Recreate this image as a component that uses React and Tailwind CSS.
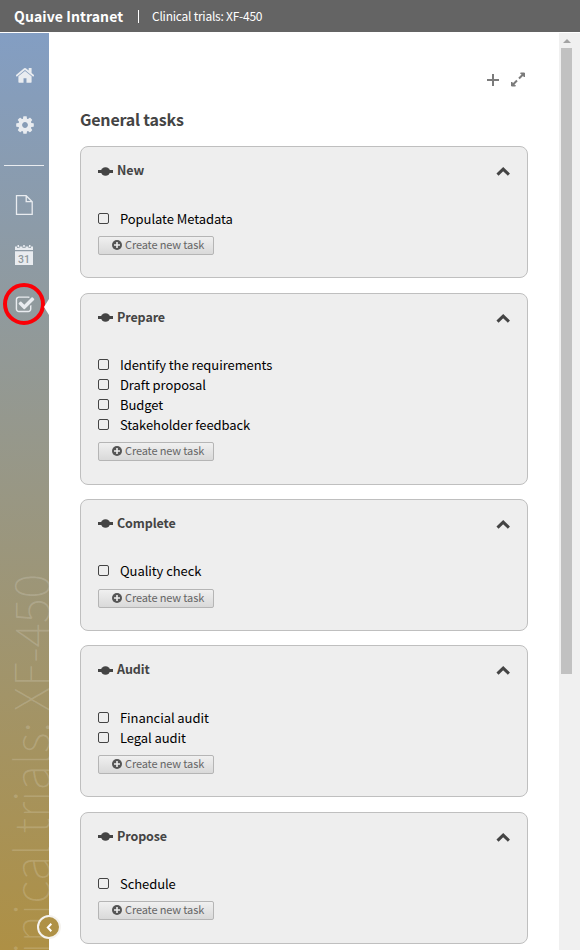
import React from "react";

const SECTIONS = [
  { title: "New", tasks: ["Populate Metadata"] },
  {
    title: "Prepare",
    tasks: ["Identify the requirements", "Draft proposal", "Budget", "Stakeholder feedback"],
  },
  { title: "Complete", tasks: ["Quality check"] },
  { title: "Audit", tasks: ["Financial audit", "Legal audit"] },
  { title: "Propose", tasks: ["Schedule"] },
];

const HOME =
  "M1472 992v480q0 26-19 45t-45 19h-384v-384h-256v384h-384q-26 0-45-19t-19-45v-480q0-1 .5-3t.5-3l575-474 575 474q1 2 1 6zm223-69l-62 74q-8 9-21 11h-3q-13 0-21-7l-692-577-692 577q-12 8-24 7-13-2-21-11l-62-74q-8-10-7-23.5t11-21.5l719-599q32-26 76-26t76 26l244 204v-195q0-14 9-23t23-9h192q14 0 23 9t9 23v408l219 182q10 8 11 21.5t-7 23.5z";
const COG =
  "M1152 896q0-106-75-181t-181-75-181 75-75 181 75 181 181 75 181-75 75-181zm512-109v222q0 12-8 23t-20 13l-185 28q-19 54-39 91 35 50 107 138 10 12 10 25t-9 23q-27 37-99 108t-94 71q-12 0-26-9l-138-108q-44 23-91 38-16 136-29 186-7 28-36 28h-222q-14 0-24.5-8.5t-11.5-21.5l-28-184q-49-16-90-37l-141 107q-10 9-25 9-14 0-25-11-126-114-165-168-7-10-7-23 0-12 8-23 15-21 51-66.5t54-70.5q-27-50-41-99l-183-27q-13-2-21-12.5t-8-23.5v-222q0-12 8-23t19-13l186-28q14-46 39-92-40-57-107-138-10-12-10-24 0-10 9-23 26-36 98.5-107.5t94.5-71.5q13 0 26 10l138 107q44-23 91-38 16-136 29-186 7-28 36-28h222q14 0 24.5 8.5t11.5 21.5l28 184q49 16 90 37l142-107q9-9 24-9 13 0 25 10 129 119 165 170 7 8 7 22 0 12-8 23-15 21-51 66.5t-54 70.5q26 50 41 98l183 28q13 2 21 12.5t8 23.5z";
const CHECK =
  "M1472 930v318q0 119-84.5 203.5t-203.5 84.5h-832q-119 0-203.5-84.5t-84.5-203.5v-832q0-119 84.5-203.5t203.5-84.5h832q63 0 117 25 15 7 18 23 3 17-9 29l-49 49q-10 10-23 10-3 0-9-2-23-6-45-6h-832q-66 0-113 47t-47 113v832q0 66 47 113t113 47h832q66 0 113-47t47-113v-254q0-13 9-22l64-64q10-10 23-10 6 0 12 3 20 8 20 29zm231-489l-814 814q-24 24-57 24t-57-24l-430-430q-24-24-24-57t24-57l110-110q24-24 57-24t57 24l263 263 647-647q24-24 57-24t57 24l110 110q24 24 24 57t-24 57z";

function Sidebar() {
  return (
    <nav className="relative z-10 flex w-[49px] shrink-0 flex-col items-center bg-linear-to-b/srgb from-[#839ec3] to-[#ae9045] pr-px text-[#e9ecf0]">
      <div className="absolute inset-0 overflow-hidden">
        <div className="absolute top-[541px] left-[-3px] rotate-180 text-[47px] leading-[64px] font-thin whitespace-nowrap text-white/17 [writing-mode:vertical-rl]">
          Clinical trials: XF-450
        </div>
      </div>
      <svg className="mt-[33px] ml-px h-[18px] w-[18px] shrink-0" viewBox="110 80 1572 1572" fill="currentColor">
        <path d={HOME} />
      </svg>
      <svg className="mt-[32px] ml-px h-[18px] w-[18px] shrink-0" viewBox="110 110 1572 1572" fill="currentColor">
        <path d={COG} />
      </svg>
      <div className="mt-[31px] h-px w-10 shrink-0 bg-[#e9ecf0]" />
      <svg className="mt-[29px] h-5 w-[18px] shrink-0" viewBox="0 0 18 20" fill="none" stroke="currentColor" strokeWidth="1.3">
        <path d="M1.500.7h9.700l6 6v12.6H1.500zM11.2.7v6h6" />
      </svg>
      <svg className="mt-[30px] h-5 w-[18px] shrink-0" viewBox="0 0 18 20">
        <path fill="currentColor" d="M0 1.500h2V3h2.500V1.500h3V3h3V1.500H13.500V3H16V1.500h2V5H0zM2.500 0H4v2.300H2.500zM8.200 0h1.600v2.300H8.200zM14 0h1.500v2.300H14zM0 6.300h18V20H0z" />
        <text x="9" y="17.500" textAnchor="middle" fontSize="10.500" fontWeight="500" fill="#8e979c" fontFamily="Roboto, sans-serif">
          31
        </text>
      </svg>
      <div className="mt-[18px] flex h-[42px] w-[42px] shrink-0 items-center justify-center rounded-full border-4 border-[#fb0007]">
        <svg className="mt-[2px] ml-px h-[20px] w-[20px]" viewBox="0 0 1792 1792" fill="currentColor">
          <path d={CHECK} />
        </svg>
      </div>
      <svg className="absolute top-[266px] right-0 h-4 w-[5px]" viewBox="0 0 5 16">
        <path d="M5 0v16L0 8z" fill="#fff" />
      </svg>
      <div className="absolute top-[882px] left-[37px] flex h-6 w-6 items-center justify-center rounded-full border-2 border-[#f5f3ef] bg-[#af9146]">
        <svg className="h-[9px] w-[7px]" viewBox="0 0 7 9" fill="none" stroke="#fff" strokeWidth="2">
          <path d="M5.300.8L1.800 4.500l3.500 3.700" />
        </svg>
      </div>
    </nav>
  );
}

function Card({ title, tasks }) {
  return (
    <section className="mb-[14.4px] rounded-lg border border-[#bfbfbf] bg-[#eee] px-[17px] pb-[22.4px]">
      <header className="flex h-[61.6px] items-start pt-[13px]">
        <svg className="mt-[6.4px] mr-1 h-[9px] w-[15px]" viewBox="0 0 15 9" fill="#444">
          <ellipse cx="7.500" cy="4.500" rx="4.600" ry="4.200" />
          <path d="M0 3h15v3H0z" />
        </svg>
        <h2 className="flex-1 text-[12.5px] leading-[20px] font-bold tracking-[-0.1px] text-[#444]">{title}</h2>
        <svg className="mt-[7px] h-[9px] w-[14px]" viewBox="0 0 14 9" fill="none" stroke="#444" strokeWidth="3">
          <path d="M1.500 7.700L7.200 2.200l5.700 5.500" />
        </svg>
      </header>
      <ul>
        {tasks.map((task) => (
          <li key={task} className="flex h-5 items-center text-[13px] leading-5 tracking-[-0.07px] text-black">
            <span className="mr-[11px] mb-[1.3px] h-[11px] w-[11px] rounded-[2px] border border-[#444]" />
            <span className="-mt-[0.5px]">{task}</span>
          </li>
        ))}
      </ul>
      <button className="mt-[7px] flex h-[19px] w-[116px] items-center rounded-[2px] border border-[#b5b5b5] bg-linear-to-b from-[#f0f0f0] to-[#d9d9d9] pl-[13px] text-[11px] leading-[17px] tracking-[-0.13px] text-[#666]">
        <svg className="mr-[3px] mb-px h-[10px] w-[10px]" viewBox="0 0 10 10">
          <circle cx="5" cy="5" r="5" fill="#555" />
          <path d="M5 2v6M2 5h6" stroke="#eee" strokeWidth="1.600" />
        </svg>
        <span className="-mt-[2px]">Create new task</span>
      </button>
    </section>
  );
}

export default function App() {
  return (
    <div className="flex h-[950px] w-[580px] flex-col overflow-hidden bg-white font-['Noto_Sans_CJK_SC','Open_Sans',sans-serif]">
      <header className="mb-px flex h-8 shrink-0 items-center bg-[#646464] pl-[14px] text-white">
        <span className="w-[109px] text-[14px] leading-8 font-bold tracking-[0.1px] whitespace-nowrap">Quaive Intranet</span>
        <span className="ml-[15px] h-[13px] w-px bg-white" />
        <span className="ml-[13px] text-[12px] leading-8 tracking-[-0.24px]">Clinical trials: XF-450</span>
      </header>
      <div className="flex min-h-0 flex-1">
        <Sidebar />
        <main className="flex-1 pr-[31px] pl-[31px]">
          <div className="flex h-[72px] items-start justify-end pt-[39px] pr-[3px]">
            <svg className="mt-[2px] mr-[12px] h-[12px] w-[12px]" viewBox="0 0 12 12" stroke="#7b7b7b" strokeWidth="2">
              <path d="M6 0v12M0 6h12" />
            </svg>
            <svg className="h-[15px] w-[14px]" viewBox="0 0 14 15" fill="#7b7b7b" stroke="#7b7b7b">
              <path d="M9.500 1H13.500V5zM.5 10v4h4z" />
              <path d="M12 2.500L8 6.500M2 12.500L6 8.500" strokeWidth="2" />
            </svg>
          </div>
          <h1 className="mb-[13.25px] h-7 text-[16px] leading-7 font-bold tracking-[-0.2px] text-[#444]">General tasks</h1>
          {SECTIONS.map((s) => (
            <Card key={s.title} {...s} />
          ))}
        </main>
        <aside className="flex w-[21px] shrink-0 flex-col bg-[#f0f0f0] pl-[2px]">
          <svg className="mt-[6px] ml-[2px] h-[4px] w-[8px]" viewBox="0 0 8 4" fill="#a3a3a3">
            <path d="M4 0l4 4H0z" />
          </svg>
          <div className="mt-[5px] h-[626px] w-[11px] bg-[#c1c1c1]" />
        </aside>
      </div>
    </div>
  );
}
